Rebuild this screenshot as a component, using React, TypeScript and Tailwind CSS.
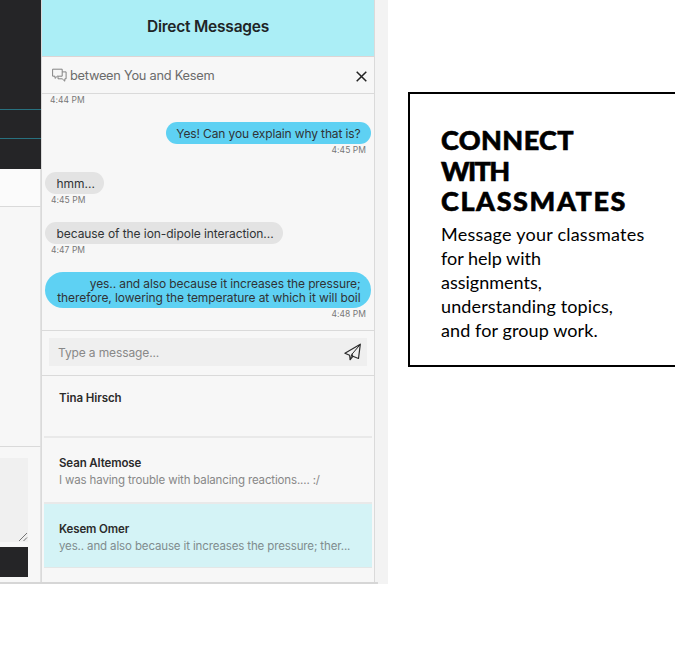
import React from "react";

function ChatIcon() {
  return (
    <svg className="h-[14px] w-[15px] shrink-0" viewBox="0 0 15 14" fill="none" stroke="#777" strokeWidth="0.9" strokeLinejoin="round">
      <path d="M.6 1.2h9.6v7H5.3L3 10.4V8.2H.6z" />
      <path d="M10.4 3.9h3.7v6.9h-1.3v2.4l-2.6-2.4H6V8.4" />
    </svg>
  );
}

function SendIcon() {
  return (
    <svg className="h-[18px] w-[18px]" viewBox="0 0 18 18" fill="none" stroke="#2b2b2b" strokeWidth="1.2" strokeLinejoin="round" strokeLinecap="round">
      <path d="M16.3 1.2.9 10.2l4.7 2 .6 4.4 2.6-3.3 5.7 2.2L16.3 1.2z" />
      <path d="M15.6 2.2 8 11.2 6.2 16.2M8 11.2l.9 2.1" strokeWidth="1" />
    </svg>
  );
}

type MessageProps = { mine?: boolean; time: string; width: string; children: React.ReactNode; tall?: boolean };

function Message({ mine, time, width, children, tall }: MessageProps) {
  return (
    <div className={`flex flex-col ${mine ? "items-end" : "items-start"} ${tall ? "h-[58px]" : "h-[50px]"}`}>
      <div
        className={`flex shrink-0 flex-col justify-center whitespace-nowrap rounded-full pt-px text-[12px] leading-[14px] text-[#303336] ${width} ${
          mine ? "items-end bg-[#5ed1f3] pr-[10.5px]" : "items-start bg-[#e3e3e3] pl-[11.5px]"
        } ${tall ? "h-[36px]" : "h-[22px]"}`}
      >
        {children}
      </div>
      <time className={`text-[8.5px] leading-[12px] tracking-[0.05px] text-[#777] ${mine ? "pr-[5px]" : "pl-[6px]"}`}>{time}</time>
    </div>
  );
}

function Sidebar() {
  return (
    <div className="flex h-[582px] w-[41px] shrink-0 flex-col bg-[#f7f7f7]">
      <div className="flex h-[169px] flex-col bg-[#252527] pt-[109px]">
        <div className="h-[30px] border-y border-[#28717f]" />
      </div>
      <div className="h-[38px] border-b border-r border-b-[#dadada] border-r-[#e2e2e2] bg-[#fbfbfb]" />
      <div className="h-[240px] border-b border-r border-b-[#dadada] border-r-[#e2e2e2]" />
      <div className="flex grow flex-col border-r border-[#e2e2e2] pt-[11px]">
        <div className="flex h-[84px] w-[28px] items-end justify-end bg-[#f0f0f0]">
          <svg className="h-[10px] w-[10px]" viewBox="0 0 10 10" stroke="#666" strokeWidth="0.9">
            <path d="M1 9 9 1M5.5 9 9 5.5" />
          </svg>
        </div>
        <div className="mt-[5px] h-[30px] w-[28px] bg-[#252527]" />
      </div>
    </div>
  );
}

function Panel() {
  return (
    <div className="flex h-[582px] w-[334px] shrink-0 flex-col border-x border-[#dadada] bg-[#f7f7f7]">
      <header className="flex h-[57px] shrink-0 items-center justify-center border-b border-[#ddd5d5] bg-[#abeef6] pb-[2px]">
        <h1 className="text-[15.5px] font-semibold leading-[20px] tracking-[-0.22px] text-[#202426]">Direct Messages</h1>
      </header>
      <div className="flex h-[37px] shrink-0 items-center border-b border-[#dadada] pl-[10px] pr-[7px]">
        <ChatIcon />
        <span className="ml-[3px] whitespace-nowrap pt-[2px] text-[12.8px] leading-[16px] tracking-[-0.25px] text-[#6b6b6b]">between You and Kesem</span>
        <svg className="ml-auto mt-[2px] h-[11px] w-[11px]" viewBox="0 0 11 11" stroke="#222" strokeWidth="1.5">
          <path d="m.7.7 9.6 9.6M10.3.7.7 10.3" />
        </svg>
      </div>
      <div className="flex h-[237px] shrink-0 flex-col overflow-hidden border-b border-[#dadada] px-[3px]">
        <time className="h-[28px] shrink-0 pl-[5px] text-[8.5px] leading-[12px] tracking-[0.05px] text-[#777]">4:44 PM</time>
        <Message mine time="4:45 PM" width="w-[205px]"><span className="tracking-[-0.13px]">Yes! Can you explain why that is?</span></Message>
        <Message time="4:45 PM" width="w-[59px]"><span>hmm...</span></Message>
        <Message time="4:47 PM" width="w-[238px]"><span className="tracking-[-0.06px]">because of the ion-dipole interaction...</span></Message>
        <Message mine tall time="4:48 PM" width="w-[326px]">
          <span className="tracking-[-0.11px]">yes.. and also because it increases the pressure;</span>
          <span className="tracking-[-0.09px]">therefore, lowering the temperature at which it will boil</span>
        </Message>
      </div>
      <div className="h-[45px] shrink-0 border-b border-[#dadada] px-[7px] pt-[7px]">
        <div className="flex h-[28px] items-center justify-between bg-[#efefef] pl-[9px] pr-[5px]">
          <span className="pt-px text-[12px] leading-[16px] tracking-[-0.12px] text-[#888]">Type a message...</span>
          <SendIcon />
        </div>
      </div>
      <ul className="flex flex-col px-[2px]">
        <li className="h-[62px] border-b-2 border-[#e9e9e9] px-[15px] pt-[14px] text-[11.5px] font-semibold leading-[16px] tracking-[-0.08px] text-[#2b2b2b]">
          Tina Hirsch
        </li>
        <li className="h-[66px] border-b-2 border-[#e9e9e9] px-[15px] pt-[17px] leading-[16px]">
          <p className="text-[11.5px] font-semibold tracking-[-0.12px] text-[#2b2b2b]">Sean Altemose</p>
          <p className="whitespace-nowrap pt-px text-[11.5px] tracking-[-0.15px] text-[#888]">I was having trouble with balancing reactions.... :/</p>
        </li>
        <li className="h-[64px] border-b border-[#e3e7e7] bg-[#d4f3f6] px-[15px] pt-[17px] leading-[16px]">
          <p className="text-[11.5px] font-semibold tracking-[-0.12px] text-[#2b2b2b]">Kesem Omer</p>
          <p className="whitespace-nowrap pt-px text-[11.5px] tracking-[-0.13px] text-[#7f8c8e]">yes.. and also because it increases the pressure; ther...</p>
        </li>
      </ul>
    </div>
  );
}

export default function App() {
  return (
    <main className="flex h-[650px] w-[675px] items-start overflow-hidden bg-white font-['Inter',sans-serif]">
      <section className="h-[584px] w-[388px] shrink-0 bg-[#f3f3f3]">
        <div className="flex">
          <Sidebar />
          <Panel />
        </div>
        <div className="h-[2px] w-[378px] bg-[#d6d6d6]" />
      </section>
      <aside className="ml-[20px] mt-[92px] h-[275px] w-[267px] shrink-0 border-2 border-r-0 border-black pl-[31px] pt-[31px] font-['Lato',sans-serif] text-black">
        <h2 className="whitespace-nowrap text-[27px] font-black leading-[30.5px] [-webkit-text-stroke:0.6px_black]">
          <span className="block tracking-[0.4px]">CONNECT</span>
          <span className="block tracking-[-1.6px]">WITH</span>
          <span className="block tracking-[1.6px]">CLASSMATES</span>
        </h2>
        <p className="mt-[5px] whitespace-nowrap text-[18px] leading-[24.2px]">
          <span className="block tracking-[0.23px]">Message your classmates</span>
          <span className="block tracking-[0px]">for help with</span>
          <span className="block tracking-[0px]">assignments,</span>
          <span className="block tracking-[0.13px]">understanding topics,</span>
          <span className="block tracking-[0.1px]">and for group work.</span>
        </p>
      </aside>
    </main>
  );
}
